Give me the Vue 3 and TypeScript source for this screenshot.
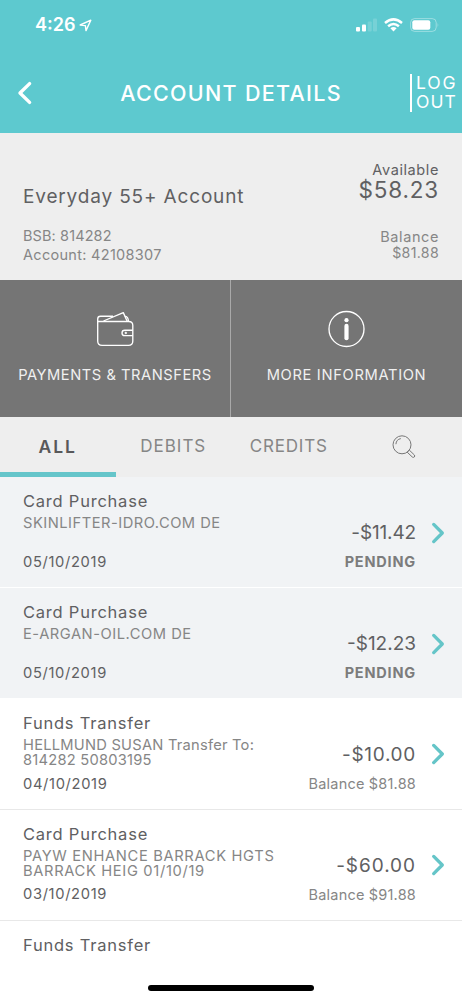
<script setup lang="ts">
interface Transaction {
  title: string
  lines: string[]
  date: string
  amount: string
  note: string
  pending: boolean
  amountTracking: number
  lineTracking: number
}

const transactions: Transaction[] = [
  { title: 'Card Purchase', lines: ['SKINLIFTER-IDRO.COM DE'], date: '05/10/2019', amount: '-$11.42', note: 'PENDING', pending: true, amountTracking: -0.15, lineTracking: 0.5 },
  { title: 'Card Purchase', lines: ['E-ARGAN-OIL.COM DE'], date: '05/10/2019', amount: '-$12.23', note: 'PENDING', pending: true, amountTracking: 0, lineTracking: 0.53 },
  { title: 'Funds Transfer', lines: ['HELLMUND SUSAN Transfer To:', '814282 50803195'], date: '04/10/2019', amount: '-$10.00', note: 'Balance $81.88', pending: false, amountTracking: 0.7, lineTracking: 0.23 },
  { title: 'Card Purchase', lines: ['PAYW ENHANCE BARRACK HGTS', 'BARRACK HEIG 01/10/19'], date: '03/10/2019', amount: '-$60.00', note: 'Balance $91.88', pending: false, amountTracking: 0.95, lineTracking: 0.66 },
]
</script>

<template>
  <div class="screen">
    <header class="header">
      <div class="status">
        <div class="clock">
          <span>4:26</span>
          <svg width="13" height="13" viewBox="0 0 13 13"><path d="M1.2 6 L11.8 1.2 L7 11.6 L6.4 6.6 Z" fill="none" stroke="#fff" stroke-width="1.4" stroke-linejoin="round" /></svg>
        </div>
        <div class="signals">
          <svg width="21" height="14" viewBox="0 0 21 14" fill="#fff">
            <rect x="0" y="9" width="4" height="4.5" rx="1" />
            <rect x="6" y="6.5" width="4" height="7" rx="1" />
            <rect x="11.7" y="3.5" width="4" height="10" rx="1" opacity=".16" />
            <rect x="17" y="0.5" width="4" height="13" rx="1" opacity=".16" />
          </svg>
          <svg class="wifi" width="19" height="14" viewBox="0 0 19 14" fill="none" stroke="#fff" stroke-width="2.5">
            <path d="M1 5 Q9.5 -2.2 18 5" />
            <path d="M4.1 8.3 Q9.5 3.7 14.9 8.3" />
            <path d="M9.5 13.5 L6.4 10.3 Q9.5 7.9 12.6 10.3 Z" fill="#fff" stroke="none" />
          </svg>
          <svg class="battery" width="30" height="14" viewBox="0 0 30 14">
            <rect x=".6" y=".6" width="25.6" height="12.8" rx="4" fill="none" stroke="#fff" stroke-opacity=".38" />
            <rect x="2.3" y="2.3" width="18" height="9.4" rx="2" fill="#fff" />
            <path d="M27.6 4.8 Q29 7 27.6 9.2 Z" fill="#fff" opacity=".4" />
          </svg>
        </div>
      </div>
      <nav class="nav">
        <svg class="back" width="16" height="24" viewBox="0 0 16 24"><path d="M12.6 2.6 L3 12 L12.6 21.4" fill="none" stroke="#fff" stroke-width="3.4" stroke-linecap="round" stroke-linejoin="round" /></svg>
        <h1>ACCOUNT DETAILS</h1>
        <div class="logout"><span class="log">LOG</span><span class="out">OUT</span></div>
      </nav>
    </header>

    <section class="account">
      <div class="identity">
        <div class="name">Everyday 55+ Account</div>
        <div class="detail bsb">BSB: 814282</div>
        <div class="detail">Account: 42108307</div>
      </div>
      <div class="funds">
        <div class="label">Available</div>
        <div class="available">$58.23</div>
        <div class="label balance">Balance</div>
        <div class="current">$81.88</div>
      </div>
    </section>

    <section class="actions">
      <div class="action">
        <svg width="38" height="38" viewBox="0 0 38 38" fill="none" stroke="#fff" stroke-width="1.35" stroke-linejoin="round">
          <path d="M1.7 11.5 V31 Q1.7 35.4 6.1 35.4 H32.4 Q36.8 35.4 36.8 31 V15.5 Q36.8 11.5 32.8 11.5 H1.7 V9 Q1.7 6.2 4.5 6.2 H17" />
          <path d="M7.5 11 L27.3 2.6 L31.2 11.3" />
          <path d="M28.8 6.3 Q32.4 6.3 32.4 11.3" />
          <path d="M36.8 20.2 H28.8 Q26 20.2 26 22.9 Q26 25.6 28.8 25.6 H36.8" />
          <circle cx="29.8" cy="22.9" r=".9" fill="#fff" stroke-width=".6" />
        </svg>
        <span class="pay">PAYMENTS &amp; TRANSFERS</span>
      </div>
      <div class="action">
        <svg width="38" height="38" viewBox="0 0 38 38">
          <circle cx="18.5" cy="19" r="17.5" fill="none" stroke="#fff" stroke-width="1.35" />
          <circle cx="18.5" cy="10.2" r="2.1" fill="#fff" />
          <rect x="16.4" y="13.8" width="4.2" height="16.5" rx="2.1" fill="#fff" />
        </svg>
        <span class="more">MORE INFORMATION</span>
      </div>
    </section>

    <nav class="tabs">
      <div class="tab active">ALL</div>
      <div class="tab debits">DEBITS</div>
      <div class="tab">CREDITS</div>
      <div class="tab search">
        <svg width="24" height="24" viewBox="0 0 24 24" fill="none" stroke="#777" stroke-width="1">
          <circle cx="10" cy="9.8" r="9" />
          <path d="M3.9 9.2 Q4.3 4.4 8.8 3.6" />
          <path d="M15.2 17.2 L17.3 15.1 L22.4 20 Q23.2 21 22.3 22 Q21.3 22.8 20.3 22 Z" />
        </svg>
      </div>
    </nav>

    <main>
      <article v-for="(t, i) in transactions" :key="i" class="row" :class="{ pending: t.pending }">
        <div class="info">
          <div class="title">{{ t.title }}</div>
          <div class="lines" :style="{ letterSpacing: t.lineTracking + 'px' }">
            <div v-for="line in t.lines" :key="line">{{ line }}</div>
          </div>
          <div class="date">{{ t.date }}</div>
        </div>
        <div class="money">
          <div class="amount" :style="{ letterSpacing: t.amountTracking + 'px' }">{{ t.amount }}</div>
          <div class="note">{{ t.note }}</div>
        </div>
        <svg class="chevron" width="15" height="24" viewBox="0 0 15 24"><path d="M2.7 3.4 L11.3 12 L2.7 20.6" fill="none" stroke="#65c5c8" stroke-width="3.3" stroke-linecap="round" stroke-linejoin="round" /></svg>
      </article>
      <article class="row last"><div class="info"><div class="title">Funds Transfer</div></div></article>
    </main>
    <div class="home"></div>
  </div>
</template>

<style>
body { margin: 0; background: #fff; }
</style>

<style scoped>
.screen { position: relative; width: 462px; height: 1000px; overflow: hidden; background: #fff; font-family: Inter, "Liberation Sans", sans-serif; font-weight: 400; color: #606062; white-space: nowrap; }
.header { height: 133px; background: #5dc9cf; color: #fff; }
.status { display: flex; align-items: center; justify-content: space-between; height: 50px; padding: 0 22.5px 0 35px; }
.clock { display: flex; align-items: center; gap: 4px; font-size: 18px; font-weight: 600; line-height: 22px; }
.signals { display: flex; align-items: center; }
.wifi { margin-left: 7px; }
.battery { margin-left: 7px; }
.nav { display: grid; grid-template-columns: 90px 1fr 90px; align-items: center; height: 80px; padding-top: 3px; }
.back { margin-left: 17px; }
h1 { margin: 0; text-align: center; font-size: 21.5px; line-height: 26px; font-weight: 500; letter-spacing: 1.3px; }
.logout { display: flex; flex-direction: column; justify-content: center; justify-self: end; width: 46px; height: 38px; padding-left: 4px; border-left: 2px solid #fff; font-size: 17.5px; line-height: 18.6px; font-weight: 400; }
.log { letter-spacing: 1.9px; }
.out { letter-spacing: 1.1px; }

.account { display: flex; justify-content: space-between; box-sizing: border-box; height: 147px; padding: 0 23px; background: #eee; }
.identity { padding-top: 51.6px; }
.name { font-size: 19px; line-height: 24px; letter-spacing: .84px; }
.detail { font-size: 14.5px; line-height: 19.3px; letter-spacing: .3px; color: #868686; }
.bsb { margin-top: 17.1px; letter-spacing: .11px; }
.funds { padding-top: 27.7px; text-align: right; }
.label { font-size: 14.5px; line-height: 18px; letter-spacing: .6px; }
.available { font-size: 22.5px; line-height: 22px; letter-spacing: .8px; }
.balance { margin-top: 28.2px; line-height: 16px; color: #868686; }
.current { font-size: 14.2px; line-height: 15.5px; letter-spacing: .3px; color: #868686; }

.actions { display: grid; grid-template-columns: 231px 231px; height: 137px; background: #757575; color: #f0f0f0; }
.action { display: flex; flex-direction: column; align-items: center; gap: 18px; box-sizing: border-box; padding-top: 30px; font-size: 14.7px; line-height: 18px; }
.action:first-child { border-right: 1px solid #a9a9a9; }
.pay { letter-spacing: .53px; }
.more { letter-spacing: .66px; }

.tabs { display: grid; grid-template-columns: repeat(4, 115.5px); height: 60.3px; background: #eee; color: #868686; }
.tab { box-sizing: border-box; height: 60.3px; text-align: center; font-size: 17px; line-height: 59px; letter-spacing: .8px; }
.debits { letter-spacing: 1px; }
.active { border-bottom: 5px solid #65c5ca; color: #58585a; font-weight: 600; font-size: 17.5px; letter-spacing: 2px; }
.search { display: flex; justify-content: center; padding-top: 18px; }

.row { display: flex; box-sizing: border-box; height: 110.85px; padding-left: 23px; border-bottom: 1px solid #e8e8e8; background: #fff; }
.pending { background: #f1f3f5; border-bottom-color: #fff; }
.last { border: 0; }
.info { flex: 1; padding-top: 13.9px; }
.title { font-size: 16.5px; line-height: 20px; letter-spacing: .77px; }
.lines { height: 29.6px; margin-top: 5px; font-size: 14.7px; line-height: 14.8px; color: #868686; }
.date { margin-top: 8.1px; font-size: 14.7px; line-height: 16px; letter-spacing: .66px; }
.money { padding-top: 44.8px; text-align: right; }
.amount { font-size: 19px; line-height: 22px; }
.note { margin-top: 9.9px; font-size: 14.5px; line-height: 16px; letter-spacing: .2px; color: #868686; }
.pending .note { font-weight: 700; letter-spacing: .8px; color: #7c7c7c; }
.chevron { margin: 43.5px 16.5px 0 14.5px; }
.home { position: absolute; left: 148px; bottom: 9px; width: 166px; height: 6px; border-radius: 3px; background: #000; }
</style>
